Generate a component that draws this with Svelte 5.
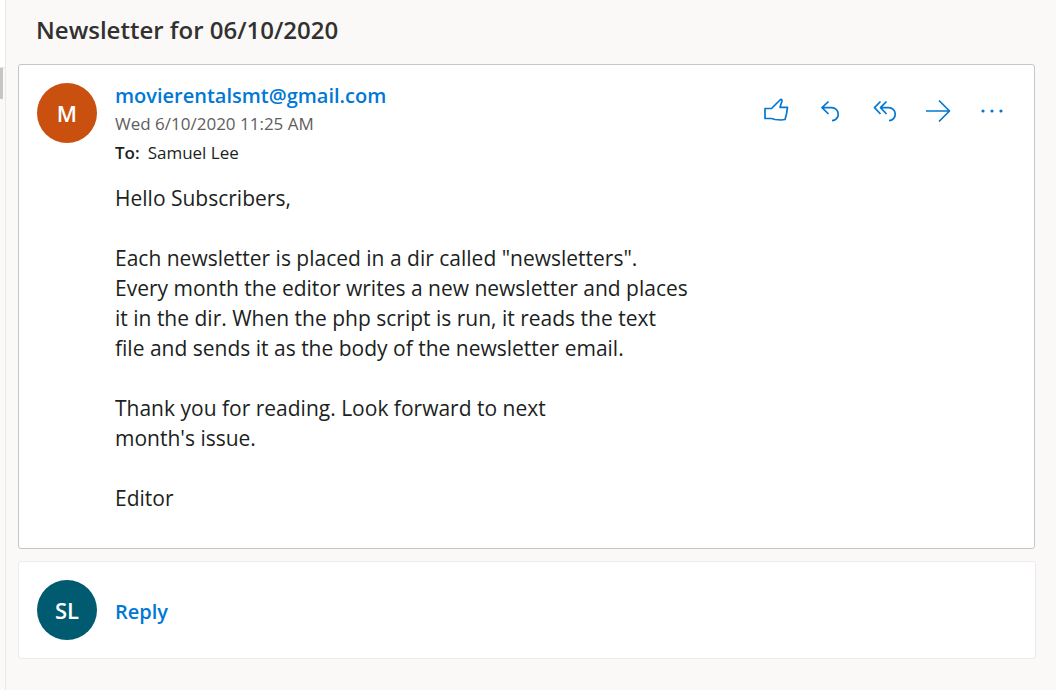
<script lang="ts">
  const subject = 'Newsletter for 06/10/2020';
  const message = `Hello Subscribers,

Each newsletter is placed in a dir called "newsletters".
Every month the editor writes a new newsletter and places
it in the dir. When the php script is run, it reads the text
file and sends it as the body of the newsletter email.

Thank you for reading. Look forward to next
month's issue.

Editor`;

  const actions = [
    { label: 'Like', path: 'M7 14.5H13.5L22 6Q24 4.5 24 7L22 13.3H29.5L28.5 20L27 25.5L23 26L17 25.5L13.5 24.5H7Z' },
    { label: 'Reply', path: 'M16.5 7.5L10 13.7L16.5 20M10 13.7H19.5A6.5 6.5 0 0 1 20 26.7' },
    { label: 'Reply all', path: 'M14.5 7.5L8.5 13.7L14.5 20M20.5 7.5L14.5 13.7L20.5 20M14.5 13.7H22.5A6.5 6.5 0 0 1 23 26.7' },
    { label: 'Forward', path: 'M6 17H29M19 6.5L29.5 17L19 27.5' }
  ];
</script>

<div class="app">
  <div class="list-edge">
    <div class="list-blank"></div>
    <div class="thumb"></div>
  </div>

  <main>
    <h1>{subject}</h1>

    <article class="card message">
      <div class="avatar sender">M</div>
      <div class="content">
        <header>
          <div class="details">
            <a class="from" href="mailto:movierentalsmt@gmail.com">movierentalsmt@gmail.com</a>
            <time datetime="2020-06-10T11:25">Wed 6/10/2020 11:25 AM</time>
            <div class="to"><b>To:</b><span>Samuel Lee</span></div>
          </div>
          <div class="actions">
            {#each actions as action}
              <button type="button" aria-label={action.label}>
                <svg viewBox="0 0 36 36"><path d={action.path} /></svg>
              </button>
            {/each}
            <button type="button" aria-label="More actions">
              <svg class="dots" viewBox="0 0 36 36">
                <circle cx="9" cy="17" r="1.6" />
                <circle cx="18" cy="17" r="1.6" />
                <circle cx="27" cy="17" r="1.6" />
              </svg>
            </button>
          </div>
        </header>
        <div class="body">{message}</div>
      </div>
    </article>

    <section class="card reply">
      <div class="avatar me">SL</div>
      <button type="button" class="reply-link">Reply</button>
    </section>
  </main>
</div>

<style>
  :global(body) {
    margin: 0;
    background: #faf9f8;
  }
  .app {
    display: flex;
    min-height: 100vh;
    color: #201f1e;
    font-family: "Segoe UI", "Open Sans", "Noto Sans", sans-serif;
  }
  .list-edge {
    width: 5px;
    flex: none;
    border-right: 1px solid #eae9e8;
  }
  .list-blank {
    height: 67px;
    background: #fff;
    border-bottom: 1px solid #e6e5e4;
  }
  .thumb {
    width: 3px;
    height: 31px;
    background: #c8c6c4;
  }
  main {
    flex: 1;
    min-width: 0;
    padding: 14px 20px 0 12px;
  }
  h1 {
    margin: 0 0 18px 18px;
    font-size: 24px;
    line-height: 32px;
    font-weight: 600;
    color: #323130;
  }
  .card {
    display: flex;
    gap: 18px;
    padding: 18px;
    background: #fff;
    border: 1px solid #edebe9;
    border-radius: 3px;
  }
  .message {
    margin-right: 1px;
    padding: 18px 15px 35px 18px;
    border-color: #c8c6c4;
  }
  .avatar {
    display: flex;
    flex: none;
    align-items: center;
    justify-content: center;
    width: 60px;
    height: 60px;
    border-radius: 50%;
    color: #fff;
    font-size: 22px;
    font-weight: 600;
  }
  .sender {
    background: #ca5010;
  }
  .me {
    background: #005b70;
  }
  .content {
    flex: 1;
    min-width: 0;
  }
  header {
    display: flex;
    justify-content: space-between;
    align-items: flex-start;
  }
  .details {
    display: flex;
    flex-direction: column;
    font-size: 17px;
    line-height: 30px;
  }
  .from {
    color: #0078d4;
    font-size: 20px;
    font-weight: 600;
    line-height: 26px;
    text-decoration: none;
  }
  time {
    color: #605e5c;
  }
  .to {
    display: flex;
    gap: 8px;
    line-height: 28px;
  }
  .to b {
    font-weight: 600;
  }
  .actions {
    display: flex;
    padding-top: 11px;
  }
  .actions button {
    display: flex;
    justify-content: center;
    width: 54px;
    padding: 0;
    border: 0;
    background: none;
    cursor: pointer;
  }
  svg {
    width: 36px;
    height: 36px;
    fill: none;
    stroke: #0078d4;
    stroke-width: 1.7;
    stroke-linejoin: round;
  }
  .dots {
    fill: #0078d4;
    stroke: none;
  }
  .body {
    margin-top: 16px;
    font-size: 21px;
    line-height: 30px;
    white-space: pre-wrap;
  }
  .reply {
    align-items: center;
    margin-top: 12px;
  }
  .reply-link {
    padding: 4px 0 0;
    border: 0;
    background: none;
    color: #0078d4;
    font: inherit;
    font-size: 20px;
    font-weight: 600;
    line-height: 30px;
    cursor: pointer;
  }
</style>
